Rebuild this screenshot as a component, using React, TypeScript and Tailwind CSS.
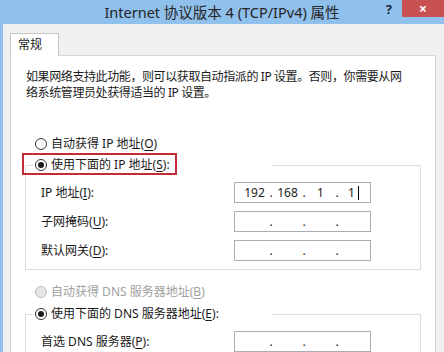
import React from 'react';

const font = { fontFamily: '"Noto Sans", "Noto Sans CJK SC", sans-serif' };

function Radio({ checked, disabled }: { checked?: boolean; disabled?: boolean }) {
  return (
    <span
      className={
        'w-[12px] h-[12px] rounded-full border flex items-center justify-center shrink-0 ' +
        (disabled ? 'border-[#bcbcbc] bg-[#e6e6e6]' : 'border-[#333333] bg-white')
      }
    >
      {checked && <span className="w-[6px] h-[6px] rounded-full bg-[#1a1a1a]" />}
    </span>
  );
}

function Key({ k }: { k: string }) {
  return (
    <>
      (<span className="underline underline-offset-[2px]">{k}</span>)
    </>
  );
}

function IpBox({ values }: { values?: string[] }) {
  const segs = values ?? ['', '', '', ''];
  return (
    <div className="w-[137px] h-[21px] border border-[#abadb3] bg-white flex items-center pl-[5px] text-[12px] text-[#1a1a1a]">
      {segs.map((v, i) => (
        <React.Fragment key={i}>
          <span className="w-[29px] text-center leading-none flex justify-center items-center">
            {v}
            {values && i === 3 && <span className="ml-[3px] w-px h-[14px] bg-black" />}
          </span>
          {i < 3 && <span className="w-[4px] text-center leading-none">.</span>}
        </React.Fragment>
      ))}
    </div>
  );
}

function Row({ label, children }: { label: React.ReactNode; children: React.ReactNode }) {
  return (
    <div className="h-[21px] flex items-center pl-[15px]">
      <span className="w-[193px] whitespace-nowrap">{label}</span>
      {children}
    </div>
  );
}

export default function App() {
  return (
    <div className="w-[444px] h-[352px] overflow-hidden bg-[#f0f0f0] flex flex-col text-[12px] text-[#1a1a1a]" style={font}>
      {/* Title bar */}
      <div className="h-[24px] bg-[#90c0ec] grid grid-cols-[1fr_auto_1fr] shrink-0">
        <div />
        <div className="flex items-center text-[14.5px] text-[#262626] whitespace-nowrap pt-[1px]">
          Internet 协议版本 4 (TCP/IPv4) 属性
        </div>
        <div className="flex justify-end items-start">
          <span className="mr-[10px] mt-[1px] text-[13px] font-bold text-[#1f2a38] leading-[16px]">?</span>
          <span className="w-[42px] h-[17px] bg-[#c75050] flex items-center justify-center text-white text-[14px] font-bold leading-none">
            ×
          </span>
        </div>
      </div>

      {/* Body */}
      <div className="flex-1 border-l-[3px] border-[#90c0ec] pt-[9px] pl-[7px] flex flex-col">
        <div className="relative z-10 -mb-px w-[49px] h-[23px] bg-white border border-b-0 border-[#c6c6c6] pl-[7px] flex items-center">
          常规
        </div>
        <div className="w-[426px] flex-1 bg-white border border-[#d5d5d5] px-[14px] pt-[13px]">
          <p className="pl-[1px] leading-[16px] whitespace-nowrap tracking-[-0.4px]">
            如果网络支持此功能，则可以获取自动指派的 IP 设置。否则，你需要从网
            <br />
            络系统管理员处获得适当的 IP 设置。
          </p>

          <div className="mt-[35px] h-[16px] flex items-center gap-[4px] pl-[10px] whitespace-nowrap">
            <Radio />
            <span>
              自动获得 IP 地址<Key k="O" />
            </span>
          </div>

          {/* IP group */}
          <div className="mt-[13px] border border-[#dcdcdc] pb-[8px]">
            <div className="relative -mt-[10px] ml-[7px] w-[239px] h-[18px] bg-white pl-[2px] flex items-center gap-[4px] whitespace-nowrap">
              <Radio checked />
              <span>
                使用下面的 IP 地址<Key k="S" />:
              </span>
              <span className="absolute -left-[11px] -top-[3px] w-[155px] h-[22px] border-2 border-[#c42b35]" />
            </div>
            <div className="mt-[8px] flex flex-col gap-[8px]">
              <Row
                label={
                  <>
                    IP 地址<Key k="I" />:
                  </>
                }
              >
                <IpBox values={['192', '168', '1', '1']} />
              </Row>
              <Row
                label={
                  <>
                    子网掩码<Key k="U" />:
                  </>
                }
              >
                <IpBox />
              </Row>
              <Row
                label={
                  <>
                    默认网关<Key k="D" />:
                  </>
                }
              >
                <IpBox />
              </Row>
            </div>
          </div>

          <div className="mt-[14px] h-[16px] flex items-center gap-[4px] pl-[10px] whitespace-nowrap text-[#a0a0a0]">
            <Radio disabled />
            <span>
              自动获得 DNS 服务器地址<Key k="B" />
            </span>
          </div>

          {/* DNS group */}
          <div className="mt-[14px] border border-[#dcdcdc] pb-[8px]">
            <div className="-mt-[10px] ml-[7px] w-[239px] h-[18px] bg-white pl-[2px] flex items-center gap-[4px] whitespace-nowrap">
              <Radio checked />
              <span>
                使用下面的 DNS 服务器地址<Key k="E" />:
              </span>
            </div>
            <div className="mt-[8px] flex flex-col gap-[8px]">
              <Row
                label={
                  <>
                    首选 DNS 服务器<Key k="P" />:
                  </>
                }
              >
                <IpBox />
              </Row>
            </div>
          </div>
        </div>
      </div>
    </div>
  );
}
